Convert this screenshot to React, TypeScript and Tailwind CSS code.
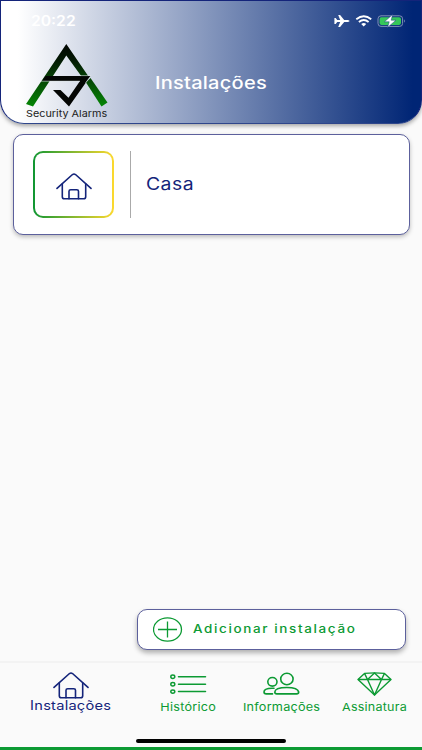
import type { ReactNode } from 'react';

function HouseIcon({ className }: { className?: string }) {
  return (
    <svg viewBox="0 0 36 28" fill="none" stroke="currentColor" strokeWidth="1.6" strokeLinecap="round" strokeLinejoin="round" preserveAspectRatio="none" className={className}>
      <path d="M1 16 16.5 1.6Q18 .4 19.5 1.6L35 16" />
      <path d="M6.3 11.5V24.5Q6.3 26.8 8.5 26.8H27.5Q29.7 26.8 29.7 24.5V11.5" />
      <path d="M13 26.8V19Q13 17.3 14.7 17.3H20.8Q22.5 17.3 22.5 19V26.8" />
    </svg>
  );
}

function ListIcon() {
  return (
    <svg width="37" height="21" viewBox="0 0 37 21" fill="none" stroke="currentColor" strokeWidth="1.5" strokeLinecap="round">
      {[2.7, 10.2, 17.6].map((y) => (
        <g key={y}>
          <ellipse cx="2.8" cy={y} rx="2" ry="1.7" />
          <path d={`M8.5 ${y}H35.5`} />
        </g>
      ))}
    </svg>
  );
}

function PeopleIcon() {
  return (
    <svg width="37" height="24" viewBox="0 0 37 24" fill="none" stroke="currentColor" strokeWidth="1.6" strokeLinecap="round" strokeLinejoin="round">
      <ellipse cx="9.4" cy="9.8" rx="4.6" ry="4.3" />
      <ellipse cx="23.9" cy="7" rx="6.2" ry="5.7" />
      <path d="M9.5 21.9H3.2Q1 21.9 1 20C1 17.7 4.5 16.3 9 16.3H11" />
      <path d="M13.8 21.9H33.6Q35.7 21.9 35.7 20C35.2 17.3 30.8 15.5 23.8 15.5S12 17.3 11.8 20Q11.8 21.9 13.8 21.9Z" />
    </svg>
  );
}

function DiamondIcon() {
  return (
    <svg width="35" height="24" viewBox="0 0 35 24" fill="none" stroke="currentColor" strokeWidth="1.4" strokeLinejoin="round">
      <path d="M1 7.5 7.5 1.4Q17.5 .4 27.5 1.4L34 7.5 17.5 23Z" />
      <path d="M1 7.5H34M7.5 1.4 10.5 7.5 17.5 1 24.5 7.5 27.5 1.4M10.5 7.5 17.5 23 24.5 7.5" />
    </svg>
  );
}

function Logo() {
  return (
    <svg width="82" height="64" viewBox="0 0 82 64">
      <defs>
        <linearGradient id="leg" gradientUnits="userSpaceOnUse" x1="0" y1="0" x2="0" y2="62">
          <stop offset="0" stopColor="#020502" />
          <stop offset="0.25" stopColor="#031803" />
          <stop offset="0.55" stopColor="#064206" />
          <stop offset="1" stopColor="#058505" />
        </linearGradient>
      </defs>
      <path fill="url(#leg)" d="M40.3 0 62.2 32H55.2L40.3 11.5 7 62.5 0 60Z" />
      <path fill="url(#leg)" d="M60 38.5 64.5 34 81.5 58.5 75.5 62.5Z" />
      <path fill="#040604" d="M19.5 32H64.5L43 62.5 27 46H34.5L42.5 53.8 54 37H16Z" />
      <path stroke="#dce4e6" strokeWidth=".6" fill="none" d="M15 37.2H54M54 31.6H65L59.5 39" />
    </svg>
  );
}

function StatusIcons() {
  return (
    <svg width="74" height="14" viewBox="0 0 74 14" fill="none">
      <path fill="#fff" d="M15.5 7C15.5 6.2 14 5.9 12.8 5.9H10.2L6.1 1H4.2L6.2 5.9H3.2L1.7 4H.4V10H1.7L3.2 8.1H6.2L4.2 13H6.1L10.2 8.1H12.8C14 8.1 15.5 7.8 15.5 7Z" />
      <path stroke="#fff" strokeWidth="1.9" d="M22.3 5.2Q29.8-.5 37.2 5.2M24.9 8Q29.8 4.2 34.6 8" />
      <path fill="#fff" d="M27.2 9.9Q29.8 8.1 32.2 9.9L29.7 12.4Z" />
      <rect x="44" y="1.8" width="24.6" height="10.6" rx="3" stroke="#7f90b6" />
      <rect x="45.6" y="3.3" width="21.4" height="7.6" rx="1.8" fill="#35c759" />
      <path d="M70.2 5.3Q72 7 70.2 8.7Z" fill="#8c9cbd" />
      <path d="M58.6 .6 50.4 7.8H55.2L53.6 13.4 62 6.2H57.2Z" fill="#fff" stroke="#174080" strokeWidth=".5" />
    </svg>
  );
}

type Tab = { label: string; icon: ReactNode; className: string; textClass: string };

const tabs: Tab[] = [
  { label: 'Instalações', icon: <HouseIcon className="w-9 h-[27px]" />, className: 'w-[141px] text-[#14247a] pt-[9px]', textClass: 'text-[12.5px] tracking-[0.2px] scale-x-[1.17]' },
  { label: 'Histórico', icon: <ListIcon />, className: 'w-[94px] text-[#0c9a33] pt-[11px]', textClass: 'text-[11px] tracking-[0.2px] scale-x-[1.15] mt-[5px]' },
  { label: 'Informações', icon: <PeopleIcon />, className: 'w-[93px] text-[#0c9a33] pt-[9px]', textClass: 'text-[11px] tracking-[0.2px] scale-x-[1.15] mt-1' },
  { label: 'Assinatura', icon: <DiamondIcon />, className: 'w-[93px] text-[#0c9a33] pt-[9px]', textClass: 'text-[11px] tracking-[0.2px] scale-x-[1.14] mt-1' },
];

export default function App() {
  return (
    <div className="w-[422px] h-[750px] flex flex-col bg-[#fafafa] font-['Inter',sans-serif] overflow-hidden">
      <header className="h-[124px] shrink-0 rounded-b-[24px] border border-[#14247a] border-b-[#2f468b] bg-[linear-gradient(90deg,#fff_4%,#002575_98%)] shadow-[0_2px_4px_rgba(0,0,0,0.35)]">
        <div className="h-[43px] pt-[13px] pl-[30px] pr-[13px] flex justify-between">
          <span className="text-white text-[14px] leading-[14px] font-semibold origin-left scale-x-[1.12]">20:22</span>
          <StatusIcons />
        </div>
        <div className="flex pl-[25px]">
          <div className="w-[82px]">
            <Logo />
            <span className="block whitespace-nowrap text-[9.5px] leading-[12px] text-[#222] origin-left scale-x-[1.14]">Security Alarms</span>
          </div>
          <h1 className="ml-[47px] mt-[29px] text-white text-[17px] leading-[20px] font-medium tracking-[0.2px] origin-left scale-x-[1.18]">Instalações</h1>
        </div>
      </header>

      <main className="flex-1 flex flex-col px-[12.5px] pt-[10px]">
        <section className="h-[101px] flex items-center rounded-[10px] border border-[#5c609c] bg-white pl-[19.5px] shadow-[0_2px_4px_rgba(0,0,0,0.25)]">
          <div className="w-[81px] h-[67px] rounded-[10px] p-[2px] bg-[linear-gradient(90deg,#109632,#fdd92e)]">
            <div className="w-full h-full rounded-lg bg-white flex items-center justify-center text-[#14247a]">
              <HouseIcon className="w-9 h-[27px] mt-1" />
            </div>
          </div>
          <div className="w-px h-[67px] bg-[#aaa] ml-4" />
          <span className="ml-[15px] mt-px text-[17px] tracking-[0.4px] text-[#14247a] origin-left scale-x-[1.14]">Casa</span>
        </section>

        <button className="mt-auto ml-auto mr-[3.5px] mb-[11px] h-[41px] w-[269px] flex items-center rounded-[10px] border border-[#5c609c] bg-white pl-[15px] text-[#0c9a33] shadow-[0_3px_5px_rgba(0,0,0,0.3)]">
          <svg width="30" height="25" viewBox="0 0 30 25" fill="none" stroke="currentColor" strokeWidth="1.3">
            <ellipse cx="14.5" cy="12.5" rx="14" ry="11.6" />
            <path d="M5 12.5H24M14.5 4.5V20.5" />
          </svg>
          <span className="ml-[9.5px] text-[11.5px] font-medium tracking-[1.4px] origin-left scale-x-[1.17]">Adicionar instalação</span>
        </button>
      </main>

      <nav className="h-[78px] shrink-0 flex border-t-2 border-[#f3f3f3]">
        {tabs.map((tab) => (
          <div key={tab.label} className={`flex flex-col items-center ${tab.className}`}>
            {tab.icon}
            <span className={`leading-[14px] whitespace-nowrap ${tab.textClass}`}>{tab.label}</span>
          </div>
        ))}
      </nav>
      <footer className="h-[11px] shrink-0 flex justify-center border-b-[3px] border-[#0c9a33]">
        <div className="w-[150px] h-1 rounded-full bg-black" />
      </footer>
    </div>
  );
}
